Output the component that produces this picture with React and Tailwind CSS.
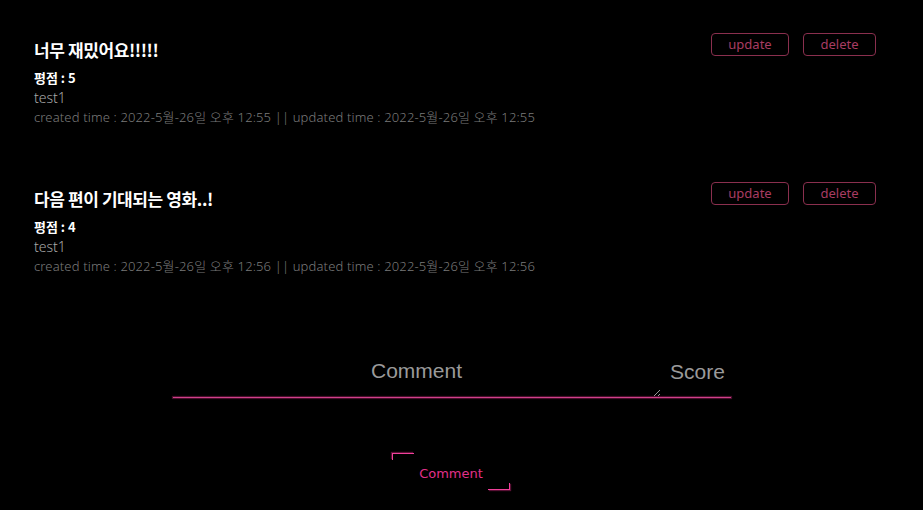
import React from "react";

const items = [
  { title: "너무 재밌어요!!!!!", score: 5, user: "test1", time: "2022-5월-26일 오후 12:55" },
  { title: "다음 편이 기대되는 영화..!", score: 4, user: "test1", time: "2022-5월-26일 오후 12:56" },
];

export default function App() {
  return (
    <div className="min-h-[510px] w-full bg-black text-white overflow-hidden" style={{ fontFamily: '"Noto Sans", "Noto Sans CJK KR", sans-serif' }}>
      <div className="pl-[34px] pr-[47px] pt-[33px]">
        {items.map((it, i) => (
          <div key={i} className="flex justify-between h-[149px]">
            <div className="flex flex-col">
              <div className="text-[17px] font-bold leading-[22px] mt-[6px] tracking-[-0.4px]" style={{ fontFamily: '"Noto Sans CJK KR", sans-serif' }}>{it.title}</div>
              <div className="text-[13px] font-bold leading-[18px] mt-[8px]" style={{ fontFamily: '"Noto Sans CJK KR", sans-serif' }}>평점 : {it.score}</div>
              <div className="text-[14px] font-light leading-[20px] mt-[1px] text-[#a8a8a8]">{it.user}</div>
              <div className="text-[13px] font-light leading-[20px] mt-[-1px] text-[#7a7a7a] tracking-[0.15px]">
                created time : {it.time} || updated time : {it.time}
              </div>
            </div>
            <div className="flex gap-[14px] items-start">
              <button className="w-[78px] h-[23px] border border-[#8a2f4e] rounded-[4px] text-[13px] text-[#a83c62] leading-none">update</button>
              <button className="w-[73px] h-[23px] border border-[#8a2f4e] rounded-[4px] text-[13px] text-[#a83c62] leading-none">delete</button>
            </div>
          </div>
        ))}
      </div>
      <div className="flex justify-center mt-[26px]">
        <div className="flex flex-col w-[558px] ml-[-20px]" style={{ fontFamily: '"Liberation Sans", Arial, sans-serif' }}>
          <div className="flex">
            <textarea
              placeholder="Comment"
              className="w-[488px] h-[40px] bg-transparent text-center text-[21px] leading-[28px] placeholder-[#9a9a9a] text-[#9a9a9a] outline-none"
            />
            <input
              placeholder="Score"
              className="w-[70px] h-[40px] bg-transparent text-center text-[21px] placeholder-[#9a9a9a] text-[#9a9a9a] outline-none pb-[10px] pl-[4px]"
            />
          </div>
          <div className="h-px bg-[#d0408a] shadow-[0_0_1px_1px_rgba(200,40,120,0.4)]" />
        </div>
      </div>
      <div className="flex justify-center mt-[55px] ml-[-21px]">
        <button className="relative w-[118px] h-[37px] pt-[5px] text-[13px] text-[#e0308a]" style={{ fontFamily: '"DejaVu Sans", Verdana, sans-serif' }}>
          <span className="absolute left-0 top-0 w-[22px] h-[7px] border-t border-l border-t-[#f0409a] border-l-[#f0409a] shadow-[-1px_-1px_1px_rgba(220,40,130,0.4)]" />
          <span className="absolute right-0 bottom-0 w-[22px] h-[7px] border-b border-r border-b-[#f0409a] border-r-[#f0409a] shadow-[1px_1px_1px_rgba(220,40,130,0.4)]" />
          Comment
        </button>
      </div>
    </div>
  );
}
